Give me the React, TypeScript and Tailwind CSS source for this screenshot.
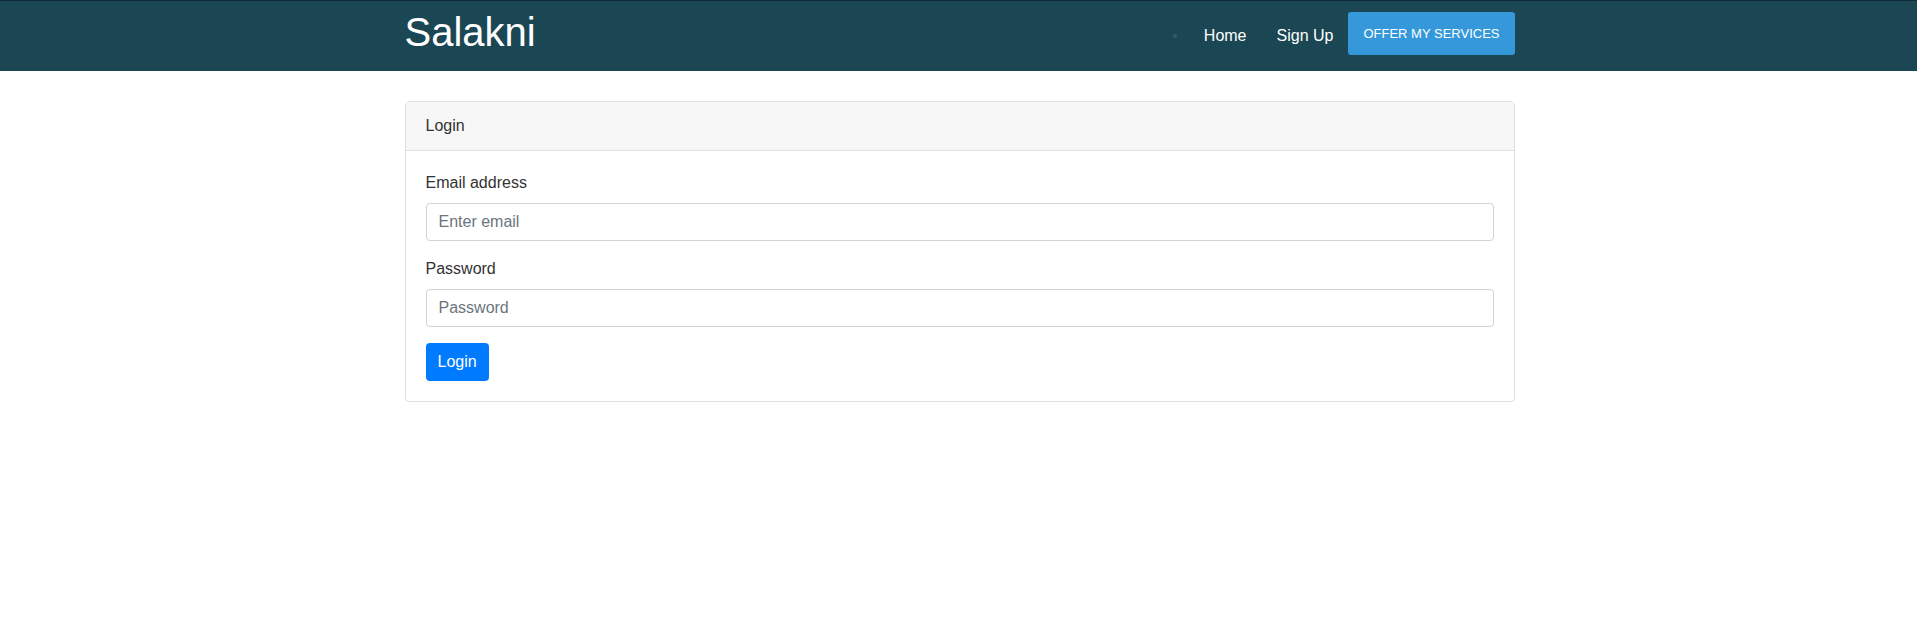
const NavLink = (props: { label: string }) => {
    return (
        <a href="#" className="px-[15px] text-[16px] text-white">
            {props.label}
        </a>
    );
};

const Navbar = () => {
    return (
        <nav className="h-[71px] border-t border-[#0e2c35] bg-[#1b4653] pl-[2px]">
            <div className="mx-auto flex h-full w-[1110px] items-center justify-between">
                <a href="#" className="pb-[8px] text-[40px] leading-none text-white">
                    Salakni
                </a>
                <div className="flex items-center">
                    <span className="mr-[12px] h-[4px] w-[4px] rounded-full bg-[#3b5a63]" />
                    <NavLink label="Home" />
                    <NavLink label="Sign Up" />
                    <button className="mb-[5px] h-[43px] rounded-[3px] bg-[#3498db] px-[15px] text-[13px] uppercase text-white">
                        Offer my services
                    </button>
                </div>
            </div>
        </nav>
    );
};

const Field = (props: { label: string; type: string; placeholder: string }) => {
    return (
        <div className="mb-[16px]">
            <label className="mb-[8px] block text-[16px] leading-[24px] text-[#333]">{props.label}</label>
            <input
                type={props.type}
                placeholder={props.placeholder}
                className="block h-[38px] w-full rounded-[4px] border border-[#ced4da] px-[12px] text-[16px] text-[#495057] placeholder:text-[#6c757d] focus:outline-none"
            />
        </div>
    );
};

export default function App() {
    return (
        <div className="min-h-screen bg-white font-['Liberation_Sans',Arial,sans-serif]">
            <Navbar />
            <div className="pl-[2px]">
                <div className="mx-auto mt-[30px] w-[1110px] rounded-[4px] border border-[#dfdfdf]">
                    <div className="border-b border-[#dfdfdf] bg-[#f7f7f7] px-[20px] py-[12px] text-[16px] leading-[24px] text-[#333]">
                        Login
                    </div>
                    <div className="p-[20px]">
                        <Field label="Email address" type="email" placeholder="Enter email" />
                        <Field label="Password" type="password" placeholder="Password" />
                        <button className="h-[38px] rounded-[4px] bg-[#007bff] px-[12px] text-[16px] text-white">
                            Login
                        </button>
                    </div>
                </div>
            </div>
        </div>
    );
}
